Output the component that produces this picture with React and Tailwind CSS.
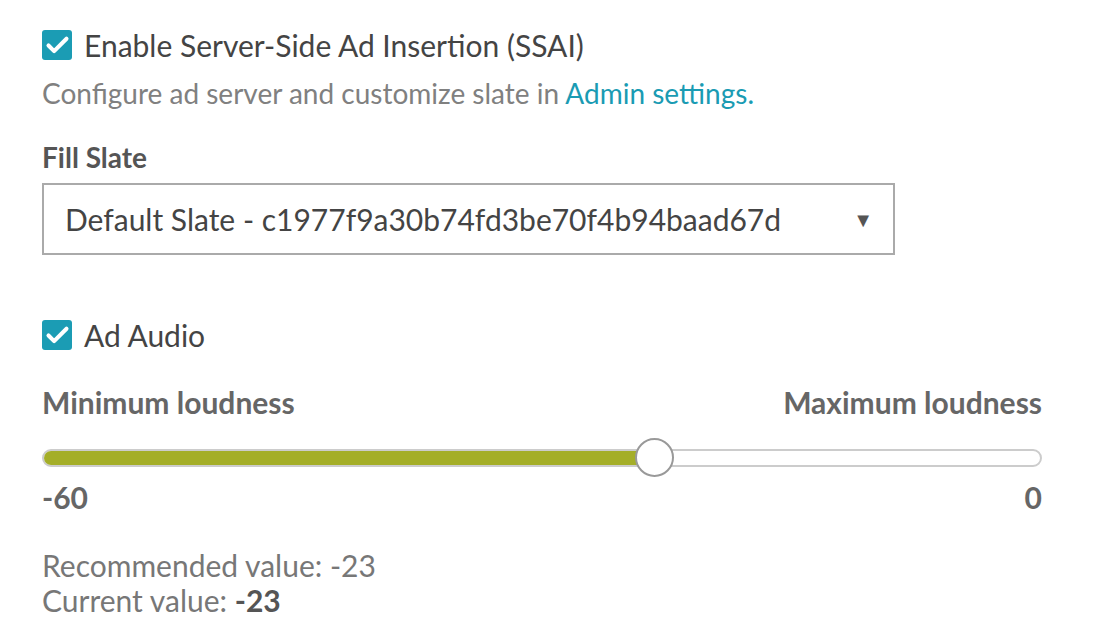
import { Check } from "lucide-react";

function Checkbox() {
  return (
    <span className="flex h-[30px] w-[30px] shrink-0 items-center justify-center rounded-[3px] bg-[#1b9cb4]">
      <Check size={27} strokeWidth={3.6} className="text-white" />
    </span>
  );
}

export default function App() {
  return (
    <div className="min-h-screen bg-white pl-[42px] pr-[56px] pt-[30px] font-['Lato',sans-serif] text-[#444]">
      {/* SSAI toggle */}
      <div className="flex items-center gap-[12px]">
        <Checkbox />
        <span className="text-[30px] leading-[30px]">
          Enable Server-Side Ad Insertion (SSAI)
        </span>
      </div>
      <p className="mt-[16px] text-[28px] leading-[34px] text-[#808080]">
        Configure ad server and customize slate in{" "}
        <a className="text-[#1a9bb3]">Admin settings.</a>
      </p>

      {/* Fill slate */}
      <div className="mt-[30px] text-[28px] font-bold leading-[34px] text-[#555]">
        Fill Slate
      </div>
      <div className="mt-[9px] flex h-[72px] w-[853px] items-center justify-between border-2 border-[#aaa] pl-[21px] pr-[20px]">
        <span className="text-[30px] text-[#444]">
          Default Slate - c1977f9a30b74fd3be70f4b94baad67d
        </span>
        <span className="text-[20px] text-[#555]">▼</span>
      </div>

      {/* Ad audio */}
      <div className="mt-[65px] flex items-center gap-[12px]">
        <Checkbox />
        <span className="text-[30px] leading-[30px]">Ad Audio</span>
      </div>

      <div className="mt-[34px] flex w-[1000px] justify-between text-[30px] font-bold leading-[36px] text-[#666]">
        <span>Minimum loudness</span>
        <span>Maximum loudness</span>
      </div>

      {/* Slider */}
      <div className="relative mt-[29px] h-[18px] w-[1000px] rounded-full border-2 border-[#ccc] bg-white">
        <div className="h-full w-[611px] rounded-l-full bg-[#a4ae28]" />
        <div className="absolute left-[591px] top-[-13px] h-[39px] w-[39px] rounded-full border-2 border-[#999] bg-white" />
      </div>

      <div className="mt-[12px] flex w-[1000px] justify-between text-[30px] font-bold leading-[36px] text-[#666]">
        <span>-60</span>
        <span>0</span>
      </div>

      <div className="mt-[33px] text-[30px] leading-[35px] text-[#777]">
        <div>Recommended value: -23</div>
        <div>
          Current value: <span className="font-bold text-[#555]">-23</span>
        </div>
      </div>
    </div>
  );
}
